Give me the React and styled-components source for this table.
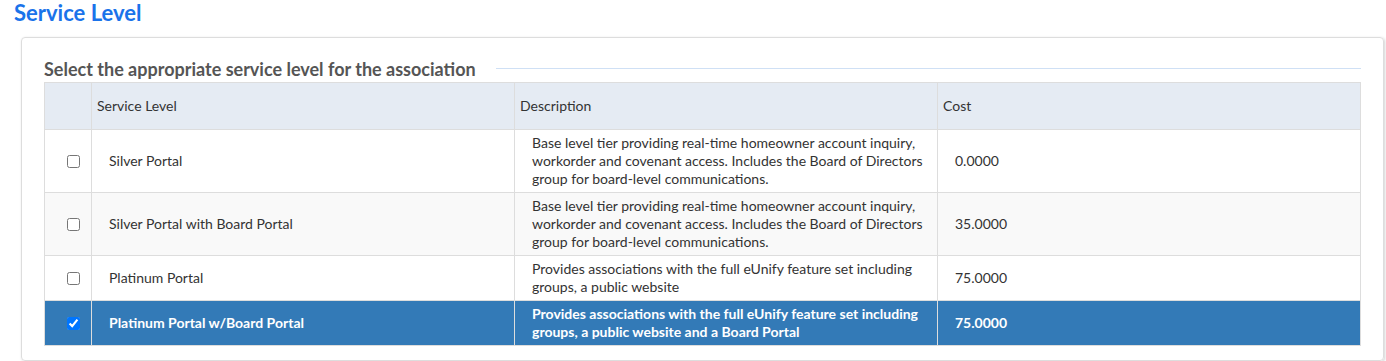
import React from 'react'
import styled, { createGlobalStyle } from 'styled-components';

const GlobalStyle = createGlobalStyle`
body {
  margin: 0;
  background: #ffffff;
  font-family: "Lato", "Open Sans", sans-serif;
  color: #333333;
}
`;

const Page = styled.div`
padding: 0 2px 0 14px;
`;

const PageTitle = styled.h2`
margin: 0;
height: 37px;
font-size: 22px;
line-height: 25px;
font-weight: 700;
color: #1a73ea;
`;

const Card = styled.div`
margin-left: 7px;
border: 1px solid #dddddd;
border-radius: 4px;
box-shadow: 1px 1px 3px rgba(0, 0, 0, 0.18);
padding: 17px 22px 14px 22px;
`;

const LegendRow = styled.div`
display: flex;
align-items: center;
height: 27px;
`;

const LegendText = styled.span`
font-size: 18px;
font-weight: 700;
color: #555555;
white-space: nowrap;
`;

const LegendLine = styled.div`
flex: 1;
height: 1px;
margin: 0 0 0 20px;
background: #cfe0f5;
`;

const Table = styled.table`
width: 100%;
border-collapse: collapse;
table-layout: fixed;
font-size: 14px;
line-height: 18px;
`;

const HeadCell = styled.th`
background: #e5ebf3;
border: 1px solid #dddddd;
text-align: left;
font-weight: 400;
padding: 14px 5px 14px 5px;
color: #333333;
width: ${p => p.$width || 'auto'};
`;

const Row = styled.tr`
background: ${p => (p.$selected ? '#337ab7' : p.$striped ? '#f9f9f9' : '#ffffff')};
color: ${p => (p.$selected ? '#ffffff' : '#333333')};
font-weight: ${p => (p.$selected ? 700 : 400)};
`;

const Cell = styled.td`
border: 1px solid #dddddd;
padding: 4px 6px 4px 17px;
vertical-align: middle;
`;

const CheckCell = styled.td`
border: 1px solid #dddddd;
padding: 0 0 0 19px;
vertical-align: middle;
`;

const Check = styled.input`
display: block;
width: 13px;
height: 13px;
margin: 0 0 0 3px;
`;

const levels = [
  {
    name: 'Silver Portal',
    desc: 'Base level tier providing real-time homeowner account inquiry, workorder and covenant access. Includes the Board of Directors group for board-level communications.',
    cost: '0.0000',
  },
  {
    name: 'Silver Portal with Board Portal',
    desc: 'Base level tier providing real-time homeowner account inquiry, workorder and covenant access. Includes the Board of Directors group for board-level communications.',
    cost: '35.0000',
  },
  {
    name: 'Platinum Portal',
    desc: 'Provides associations with the full eUnify feature set including groups, a public website',
    cost: '75.0000',
  },
  {
    name: 'Platinum Portal w/Board Portal',
    desc: 'Provides associations with the full eUnify feature set including groups, a public website and a Board Portal',
    cost: '75.0000',
    selected: true,
  },
];

const App = () => {
  return (
    <>
      <GlobalStyle />
      <Page>
        <PageTitle>Service Level</PageTitle>
        <Card>
          <LegendRow>
            <LegendText>Select the appropriate service level for the association</LegendText>
            <LegendLine />
          </LegendRow>
          <Table>
            <thead>
              <tr>
                <HeadCell $width="36px"></HeadCell>
                <HeadCell>Service Level</HeadCell>
                <HeadCell>Description</HeadCell>
                <HeadCell>Cost</HeadCell>
              </tr>
            </thead>
            <tbody>
              {levels.map((l, i) => (
                <Row key={l.name} $striped={i % 2 === 1} $selected={l.selected}>
                  <CheckCell>
                    <Check type="checkbox" checked={!!l.selected} readOnly />
                  </CheckCell>
                  <Cell>{l.name}</Cell>
                  <Cell>{l.desc}</Cell>
                  <Cell>{l.cost}</Cell>
                </Row>
              ))}
            </tbody>
          </Table>
        </Card>
      </Page>
    </>
  )
}

export default App;
